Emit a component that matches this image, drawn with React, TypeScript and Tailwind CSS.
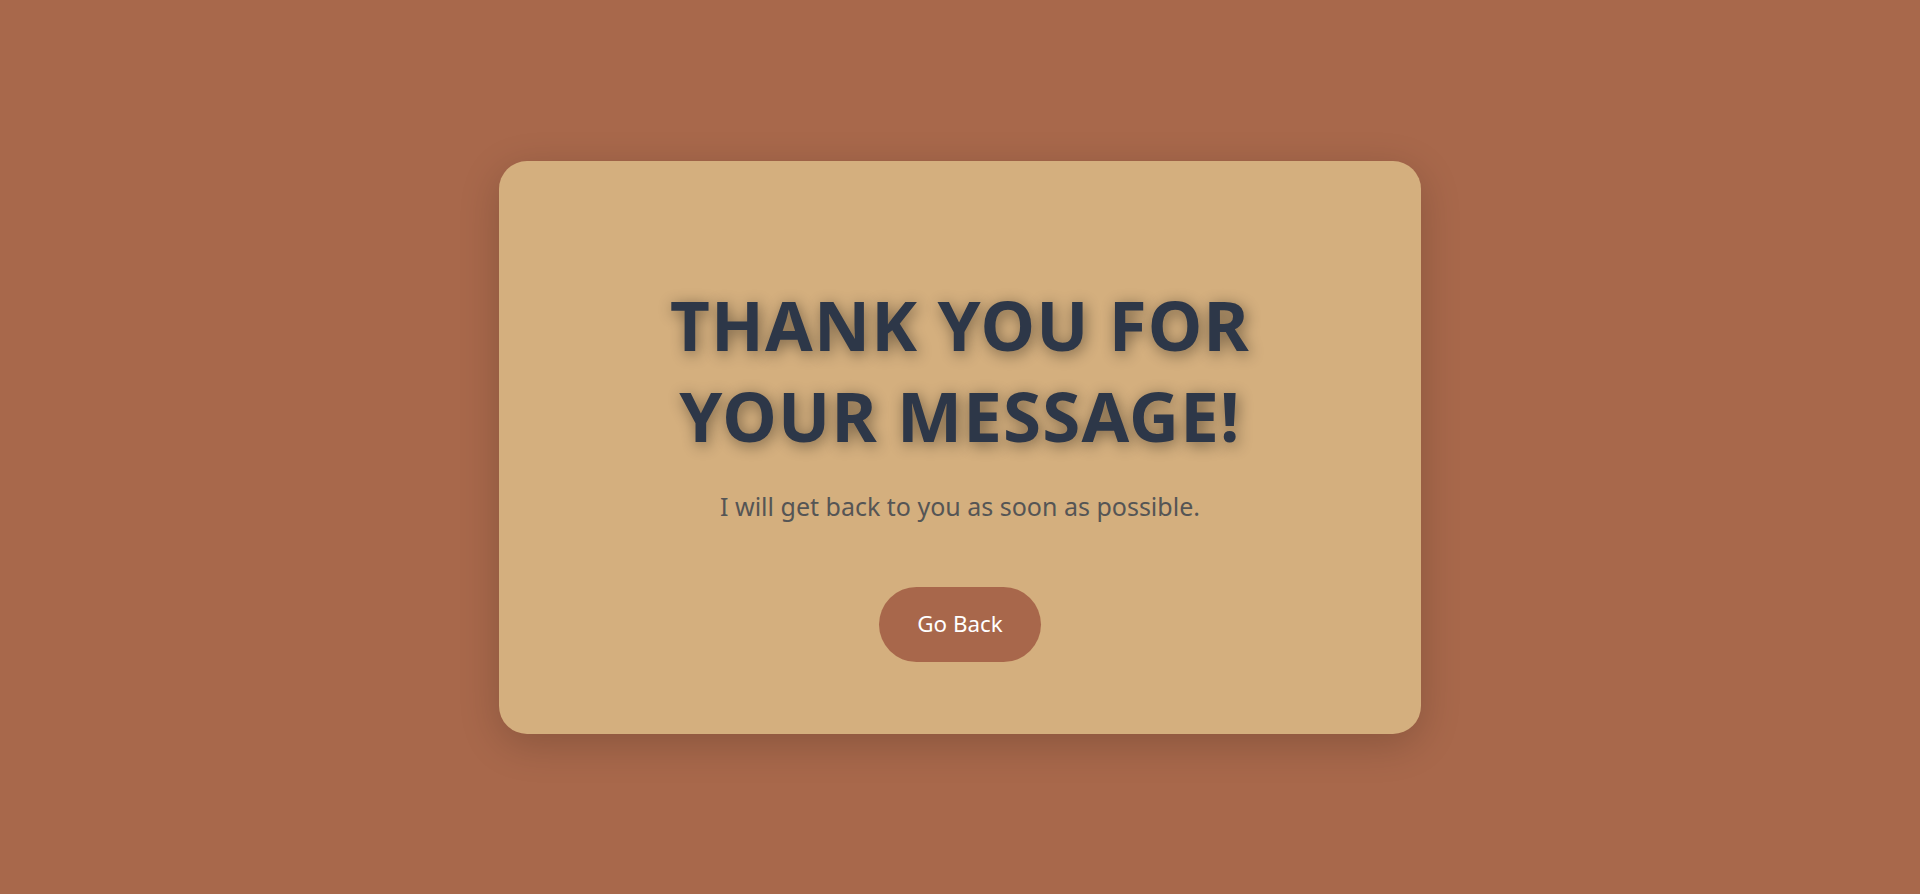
import React from "react";

const App = () => {
  return (
    <div
      className="min-h-screen w-full bg-[#a8684b] flex items-center justify-center"
      style={{ fontFamily: '"Noto Sans", "Open Sans", sans-serif' }}
    >
      <div className="w-[922px] h-[573px] bg-[#d4af7e] rounded-[28px] shadow-[0_10px_40px_rgba(0,0,0,0.18)] flex flex-col items-center pt-[118px] pb-[72px] text-center">
        <h1 className="text-[69px] leading-[91px] font-bold uppercase tracking-[1.2px] text-[#2d3748] [text-shadow:2px_3px_15px_rgba(0,0,0,0.45)]">
          Thank you for
          <br />
          your message!
        </h1>
        <p className="mt-[27px] text-[25px] leading-[36px] text-[#555555]">
          I will get back to you as soon as possible.
        </p>
        <button className="mt-[63px] h-[75px] px-[38px] rounded-full bg-[#a8674b] text-white text-[22.4px]">
          Go Back
        </button>
      </div>
    </div>
  );
};

export default App;
